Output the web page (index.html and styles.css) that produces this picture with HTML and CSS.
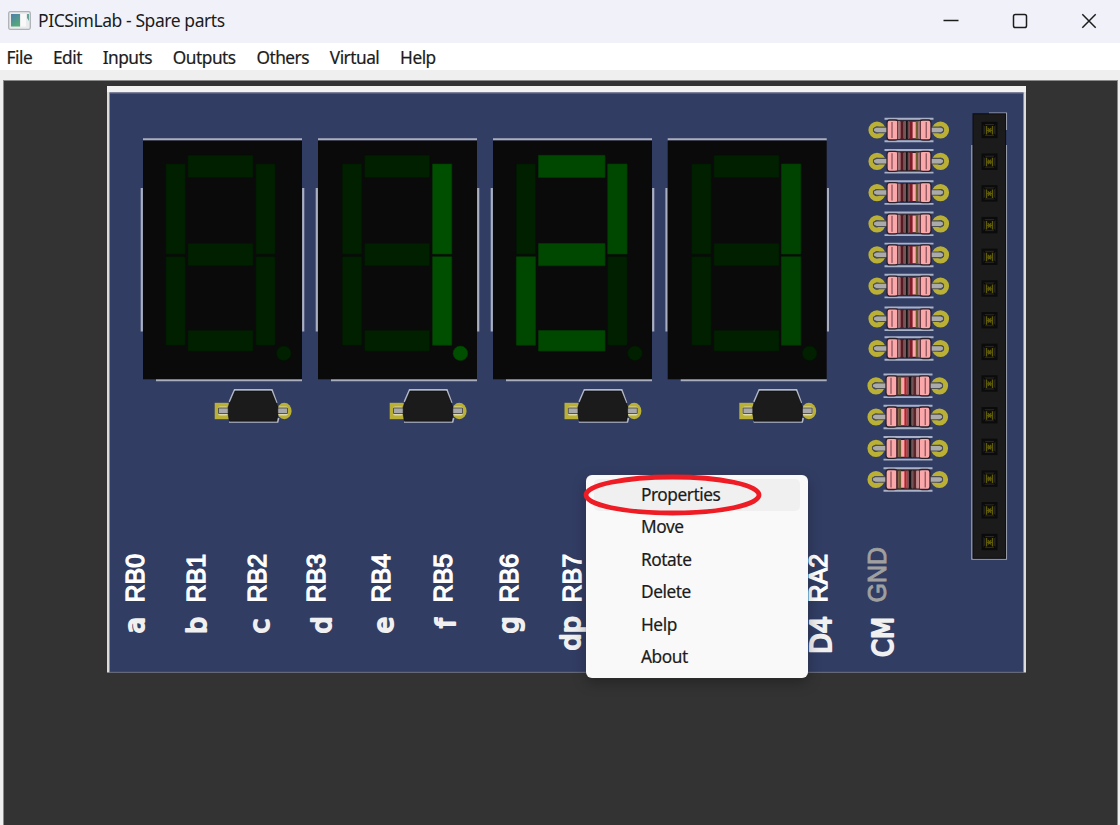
FILE: index.html
```html
<!DOCTYPE html>
<html lang="en">
<head>
<meta charset="utf-8">
<title>PICSimLab - Spare parts</title>
<link rel="stylesheet" href="styles.css">
</head>
<body>
<div class="window">
  <header class="titlebar">
    <svg class="app-icon" width="23" height="19" viewBox="0 0 23 19">
      <defs><linearGradient id="ig" x1="0" y1="0" x2="0.5" y2="1"><stop offset="0" stop-color="#4d7fae"/><stop offset="1" stop-color="#55a878"/></linearGradient></defs>
      <rect x="0.7" y="0.7" width="21.6" height="17.6" rx="1.5" fill="#e9ebec" stroke="#aeb1b5" stroke-width="1.3"/>
      <rect x="3" y="3" width="9" height="12.5" fill="url(#ig)"/>
      <rect x="13" y="3" width="5" height="12.5" fill="#f8f9f9"/>
      <path d="M19 3h2v7l-2-3z" fill="#62a699"/>
    </svg>
    <h1 class="title">PICSimLab - Spare parts</h1>
    <div class="controls">
      <svg width="16" height="16" viewBox="0 0 16 16"><path d="M.5 7.5h15" class="ctl"/></svg>
      <svg width="16" height="16" viewBox="0 0 16 16"><rect x="1.500" y="1.500" width="13" height="13" rx="1.800" class="ctl"/></svg>
      <svg width="16" height="16" viewBox="0 0 16 16"><path d="M1.300 1.300l13.400 13.400M14.700 1.300L1.300 14.700" class="ctl"/></svg>
    </div>
  </header>
  <nav class="menubar">
    <span>File</span><span>Edit</span><span>Inputs</span><span>Outputs</span><span>Others</span><span>Virtual</span><span>Help</span>
  </nav>
  <main class="workspace">
    <svg class="board" width="919" height="587" viewBox="107 86 919 587">
      <defs>
        <g id="case">
          <path d="M143 139.300H302M156 380.200H302M141.800 188V331.500M303.200 188V331.500" stroke="#a9afc0" stroke-width="2.200"/>
          <rect x="143" y="140.500" width="159" height="238.800" fill="#0a0a0a"/>
        </g>
        <g id="diode">
          <rect x="214.700" y="402.800" width="14" height="16.400" fill="#b9b035"/>
          <ellipse cx="284.300" cy="411" rx="7.300" ry="8.200" fill="#b9b035"/>
          <rect x="218" y="406.500" width="10" height="9" rx="2" fill="#ded9aa"/>
          <rect x="278" y="406.500" width="10" height="9" rx="2" fill="#ded9aa"/>
          <path d="M229 408H218.500V413.500H229M277 408H287.500V413.500H277" fill="#a9a9a9" stroke="#55554e"/>
          <path d="M229.500 402L234.700 390H271.800L276.600 403M229 421.800H277.500L278.500 418" fill="none" stroke="#b4b9c6" stroke-width="2"/>
          <path d="M235 391H271.300L277.800 407V414L276.800 421.300H229.500L228.200 414V407Z" fill="#1b1b1b" stroke="#0c0c0c" stroke-width=".6"/>
        </g>
        <g id="leads">
          <path d="M29.500-11.300H78.500M29.500 11.300H78.500" stroke="#aab2c7" stroke-width="1.900"/>
          <circle cx="22" cy="0" r="6.100" fill="#323d64" stroke="#b9b035" stroke-width="5"/>
          <circle cx="85.500" cy="0" r="6.100" fill="#323d64" stroke="#b9b035" stroke-width="5"/>
          <path d="M33 2.700H21.500L18.500 1.200V-1.500L21.500-2.900H33M75-2.900H86L88.500-1.500V1.200L86 2.700H75" fill="#aaa" stroke="#4d4e50" stroke-width="1.100"/>
          <path d="M34.500-10H40Q42.500-10 43-9H65Q65.500-10 68-10H73.500Q76-10 76-7V7Q76 10 73.500 10H68Q65.500 10 65 9H43Q42.500 10 40 10H34.500Q32 10 32 7V-7Q32-10 34.500-10Z" fill="#fba8ab" stroke="#2a2027" stroke-width="1.300"/>
        </g>
        <g id="ra">
          <use href="#leads"/>
          <g transform="translate(0 -9)">
            <rect x="42.500" width="3" height="18" fill="#9a7377"/><rect x="45.500" width="3.200" height="18" fill="#561a22"/>
            <rect x="48.700" width="2.200" height="18" fill="#765559"/><rect x="50.900" width="2" height="18" fill="#151214"/>
            <rect x="52.900" width="1.500" height="18" fill="#6b4a50"/><rect x="54.400" width="3.200" height="18" fill="#7c1c26"/>
            <rect x="60.700" width="2.600" height="18" fill="#6c5c2c"/><rect x="63.300" width="2.300" height="18" fill="#957078"/>
            <path d="M42.500 0V18M65.500 0V18M37 1V17M71.200 1V17" stroke="#5a3038" stroke-width=".9"/>
          </g>
        </g>
        <g id="rb">
          <use href="#leads"/>
          <g transform="translate(0 -9)">
            <rect x="42.500" width="1.800" height="18" fill="#49323a"/><rect x="44.300" width="2.800" height="18" fill="#6b5b30"/>
            <rect x="50.400" width="2.300" height="18" fill="#b5222a"/><rect x="52.700" width="2" height="18" fill="#7b555c"/>
            <rect x="54.700" width="3" height="18" fill="#151214"/><rect x="57.700" width="1.500" height="18" fill="#715458"/>
            <rect x="59.200" width="3.200" height="18" fill="#562629"/><rect x="62.400" width="2.500" height="18" fill="#c18c90"/>
            <path d="M42.500 0V18M65.500 0V18M37 1V17M71.200 1V17" stroke="#5a3038" stroke-width=".9"/>
          </g>
        </g>
        <g id="pin">
          <rect x="-8" y="-8.200" width="16" height="16.400" fill="#0b0b0b"/>
          <rect x="-6" y="-6" width="12" height="12" fill="#292929"/>
          <path d="M-6-6L6 6M6-6L-6 6" stroke="#080808" stroke-width="1.300"/>
          <rect x="-4.600" y="-5" width="9.200" height="10" fill="#101008"/>
          <path d="M-3-4V4.500M3-4V4.500M-3 .3H3M-1.500-2L1.500 2.500M1.500-2L-1.500 2.500" stroke="#5f5b08" stroke-width="1.300"/>
        </g>
      </defs>

      <rect x="107" y="86" width="919" height="586.500" fill="#dcdcdc"/>
      <rect x="107" y="86" width="919" height="6" fill="#f2f2f2"/>
      <rect x="109.500" y="92.500" width="914" height="579.500" fill="#323d64"/>
      <path d="M109.500 93H1023.500" stroke="#707994"/>
      <path d="M109.500 672.200H1023.500" stroke="#565b70"/>

      <use href="#case"/><use href="#case" x="175"/><use href="#case" x="350"/><use href="#case" x="524.700"/>
      <g class="off">
        <path d="M188 155.300h65v22.300h-65zM188 243.500h65v22.300h-65zM188 330.500h65v20.500h-65zM166 164h19.300v90h-19.300zM256 164h19v90h-19zM166 256.700h19.300v88.500h-19.300zM256 256.700h19v88.500h-19z"/><circle cx="283.800" cy="353.300" r="7.300"/>
        <path d="M364.700 155.300h65v22.300h-65zM364.700 243.500h65v22.300h-65zM364.700 330.500h65v20.500h-65zM342.500 164h19.300v90h-19.300zM342.500 256.700h19.300v88.500h-19.300z"/>
        <path d="M516.300 164h19.300v90h-19.300zM607.700 256.700h19.300v88.500h-19.300z"/><circle cx="635" cy="353.300" r="7.300"/>
        <path d="M714 155.300h65v22.300h-65zM714 243.500h65v22.300h-65zM714 330.500h65v20.500h-65zM691.700 164h19.300v90h-19.300zM691.700 256.700h19.300v88.500h-19.300z"/><circle cx="809.600" cy="353.300" r="7.300"/>
      </g>
      <path class="on" d="M432.500 164h19.300v90h-19.300zM432.500 256.700h19.300v88.500h-19.300z"/><circle class="on" cx="460.400" cy="353.300" r="7.300"/>
      <path class="on mid" d="M538.500 155.300h66.500v22.300h-66.500zM538.500 243.500h66.500v22.300h-66.500zM538.500 330.500h66.500v20.500h-66.500zM607.700 164h19.300v90h-19.300zM516.300 256.700h19.300v88.500h-19.300z"/>
      <path class="on low" d="M781.500 164h19.300v90h-19.300zM781.500 256.700h19.300v88.500h-19.300z"/>

      <use href="#diode"/><use href="#diode" x="175"/><use href="#diode" x="349.800"/><use href="#diode" x="524.600"/>

      <use href="#ra" x="855" y="130"/><use href="#ra" x="855" y="161.300"/><use href="#ra" x="855" y="192.600"/><use href="#ra" x="855" y="223.800"/>
      <use href="#ra" x="855" y="254.900"/><use href="#ra" x="855" y="286.100"/><use href="#ra" x="855" y="318.800"/><use href="#ra" x="855" y="348.500"/>
      <use href="#rb" x="854" y="385.800"/><use href="#rb" x="854" y="417"/><use href="#rb" x="854" y="448.300"/><use href="#rb" x="854" y="479.500"/>

      <path d="M989 113.300H1006.300V130M1006.300 145V559H972V145" fill="none" stroke="#a3a9b8" stroke-width="1.500"/>
      <rect x="973" y="113.800" width="32.600" height="444.500" fill="#1b1b1b" stroke="#0c0d10" stroke-width="1"/>
      <use href="#pin" x="989.500" y="130"/><use href="#pin" x="989.500" y="161.700"/><use href="#pin" x="989.500" y="193.400"/><use href="#pin" x="989.500" y="225.100"/><use href="#pin" x="989.500" y="256.800"/><use href="#pin" x="989.500" y="288.500"/><use href="#pin" x="989.500" y="320.200"/>
      <use href="#pin" x="989.500" y="351.900"/><use href="#pin" x="989.500" y="383.500"/><use href="#pin" x="989.500" y="415.200"/><use href="#pin" x="989.500" y="446.900"/><use href="#pin" x="989.500" y="478.600"/><use href="#pin" x="989.500" y="510.300"/><use href="#pin" x="989.500" y="542"/>

      <g class="port">
        <text transform="translate(144 602.500) rotate(-90)">RB0</text>
        <text transform="translate(204.500 602.500) rotate(-90)">RB1</text>
        <text transform="translate(266.300 602.500) rotate(-90)">RB2</text>
        <text transform="translate(325.300 602.500) rotate(-90)">RB3</text>
        <text transform="translate(390 602.500) rotate(-90)">RB4</text>
        <text transform="translate(451.700 602.500) rotate(-90)">RB5</text>
        <text transform="translate(517.700 602.500) rotate(-90)">RB6</text>
        <text transform="translate(581.300 602.500) rotate(-90)">RB7</text>
        <text transform="translate(827.300 602.500) rotate(-90)">RA2</text>
        <text class="gnd" transform="translate(886 602.500) rotate(-90)">GND</text>
      </g>
      <g class="silk">
        <text transform="translate(143.500 633.500) rotate(-90)">a</text>
        <text transform="translate(205.800 634) rotate(-90)">b</text>
        <text transform="translate(268.500 633.500) rotate(-90)">c</text>
        <text transform="translate(330.800 633.500) rotate(-90)">d</text>
        <text transform="translate(393 633.500) rotate(-90)">e</text>
        <text transform="translate(455.300 628) rotate(-90)">f</text>
        <text transform="translate(518 633.500) rotate(-90)">g</text>
        <text transform="translate(580.300 650.500) rotate(-90)">dp</text>
        <text class="caps" transform="translate(830.500 654) rotate(-90)" textLength="38" lengthAdjust="spacingAndGlyphs">D4</text>
        <text class="caps" transform="translate(892.800 657) rotate(-90)" textLength="40" lengthAdjust="spacingAndGlyphs">CM</text>
      </g>
    </svg>
    <div class="context-menu">
      <div class="item active">Properties</div>
      <div class="item">Move</div>
      <div class="item">Rotate</div>
      <div class="item">Delete</div>
      <div class="item">Help</div>
      <div class="item">About</div>
    </div>
    <svg class="highlight" width="180" height="44" viewBox="0 0 180 44"><ellipse cx="90.500" cy="22" rx="86.500" ry="18" fill="none" stroke="#ee1c24" stroke-width="4.800"/></svg>
  </main>
</div>
</body>
</html>
```
FILE: styles.css
```css
* { box-sizing: border-box; }
body { margin: 0; background: #efefef; font-family: "Noto Sans", "Open Sans", sans-serif; color: #1c1c20; }
.window { width: 1120px; height: 825px; display: flex; flex-direction: column; overflow: hidden; background: #efefef; }
.titlebar { height: 43px; flex: none; display: flex; align-items: center; padding: 0 23px 2px 8px; background: #f1f2f9; }
.app-icon { flex: none; }
.title { margin: 0 0 1px 7px; font-size: 17.5px; font-weight: 400; letter-spacing: -0.43px; white-space: nowrap; }
.controls { margin-left: auto; display: flex; align-items: center; gap: 53px; }
.ctl { fill: none; stroke: #1c1c1c; stroke-width: 1.5; }
.menubar { height: 27px; flex: none; display: flex; align-items: center; gap: 20.8px; padding: 2px 0 0 6.5px; background: #fff; font-size: 17.3px; letter-spacing: -0.5px; -webkit-text-stroke: 0.2px #1c1c20; }
.workspace { position: relative; flex: 1; margin: 11px 3px 0 4px; padding: 5px 0 0 103px; background: #333; box-shadow: 0 0 0 1px #8a8a8a; }
.board { display: block; }
.off { fill: #002000; stroke: #001800; stroke-width: 0.6; }
.on { fill: #004f00; stroke: #003a00; stroke-width: 0.6; }
.on.mid { fill: #004800; }
.on.low { fill: #004200; }
.port { font-family: "Liberation Sans", Arial, sans-serif; font-size: 25px; fill: #fff; stroke: #fff; stroke-width: 1.3; }
.gnd { fill: #a0a0a0; stroke: #a0a0a0; stroke-width: 0.9; }
.silk { font-family: "DejaVu Sans", sans-serif; font-size: 27px; fill: #f0f0f0; stroke: #f0f0f0; stroke-width: 2.1; stroke-linejoin: round; }
.caps { font-size: 29px; }
.context-menu { position: absolute; left: 581.5px; top: 393.5px; width: 222px; height: 203.5px; padding: 4px 8px; border-radius: 6px; background: #f9f9f9; box-shadow: 0 5px 14px rgba(0,0,0,.28), 0 0 1px #555; font-size: 17.3px; letter-spacing: -0.45px; -webkit-text-stroke: 0.2px #1c1c20; }
.item { height: 32.5px; line-height: 32.5px; padding-left: 47.5px; border-radius: 5px; }
.active { background: #f0f0f0; }
.highlight { position: absolute; left: 578px; top: 392px; }
```
